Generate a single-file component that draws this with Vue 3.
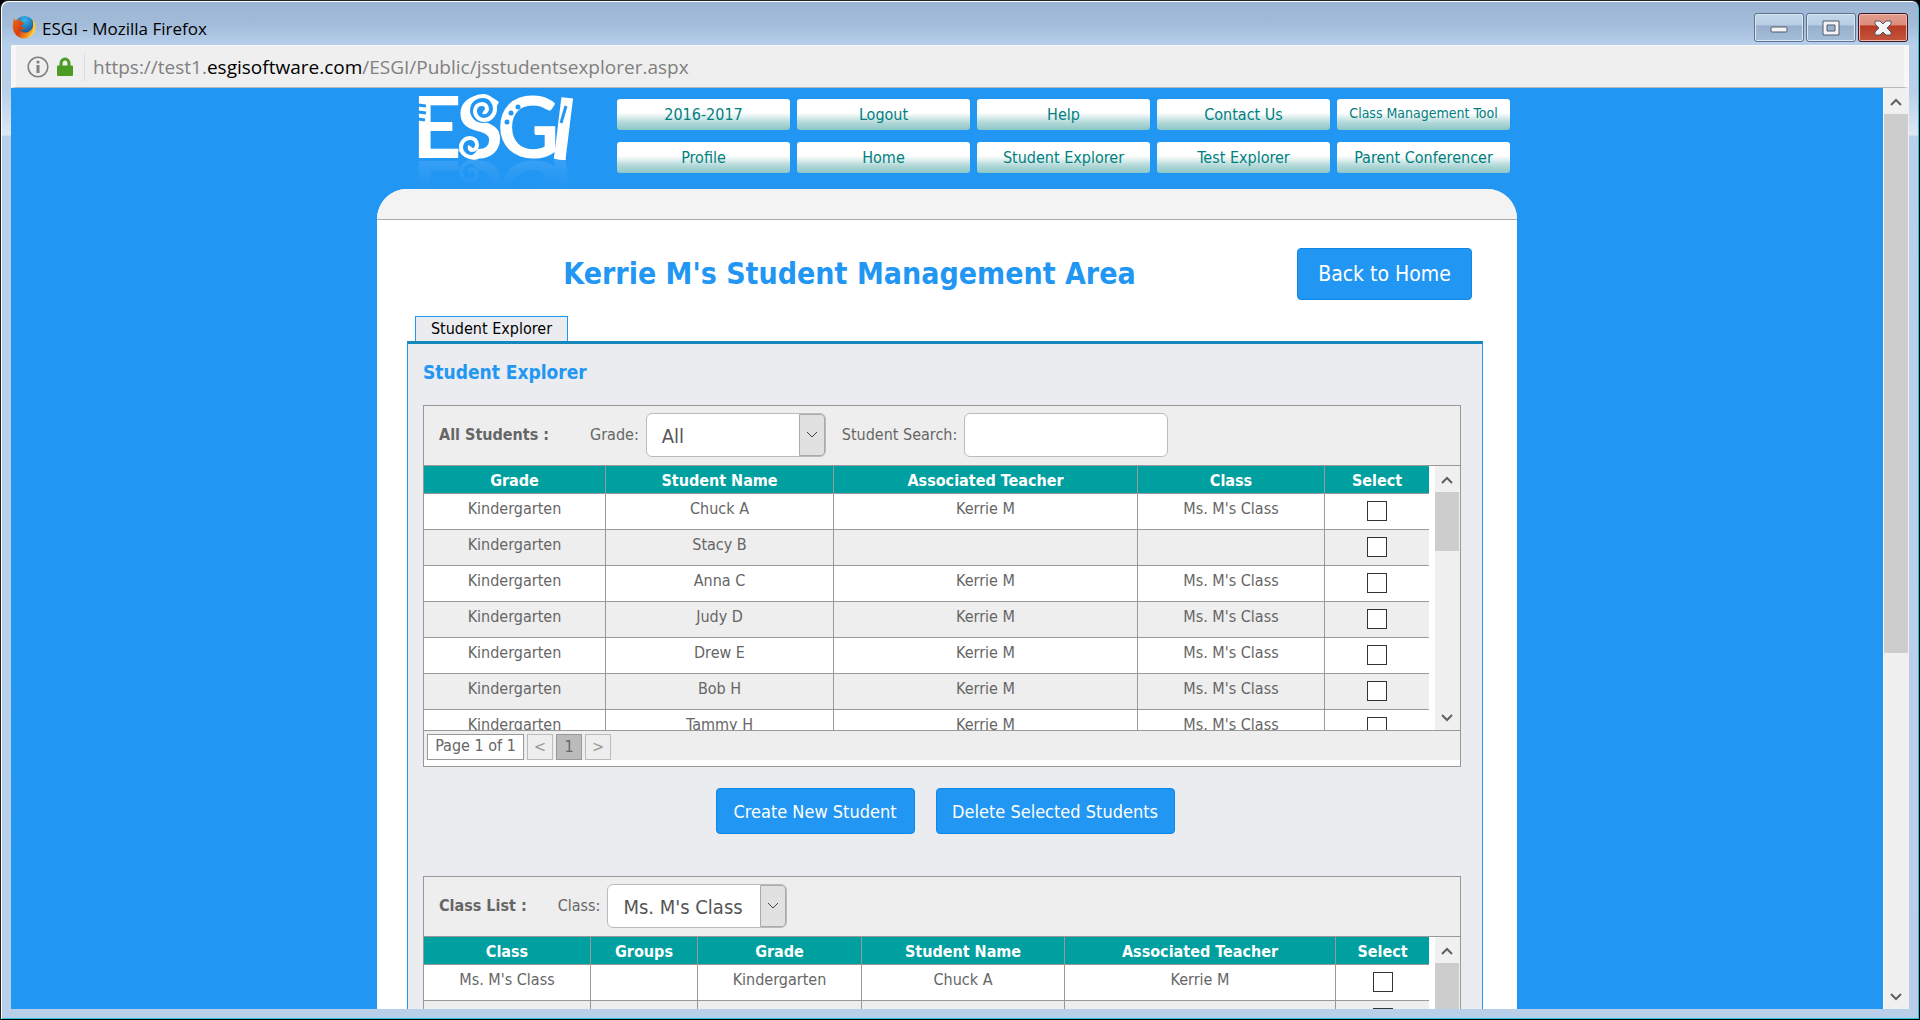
<script setup>
import { ref } from 'vue'

const navRows = [
  [
    { label: '2016-2017' },
    { label: 'Logout' },
    { label: 'Help' },
    { label: 'Contact Us' },
    { label: 'Class Management Tool', small: true },
  ],
  [
    { label: 'Profile' },
    { label: 'Home' },
    { label: 'Student Explorer' },
    { label: 'Test Explorer' },
    { label: 'Parent Conferencer' },
  ],
]

const row = (name, assigned = true) => ({
  grade: 'Kindergarten',
  name,
  teacher: assigned ? 'Kerrie M' : '',
  klass: assigned ? "Ms. M's Class" : '',
})

const students = [
  row('Chuck A'),
  row('Stacy B', false),
  row('Anna C'),
  row('Judy D'),
  row('Drew E'),
  row('Bob H'),
  row('Tammy H'),
]
const classList = [row('Chuck A'), row('Anna C'), row('Judy D')]

const grade = ref('All')
const search = ref('')
const klass = ref("Ms. M's Class")
</script>

<template>
  <div class="window">
    <header class="titlebar">
      <svg class="firefox" viewBox="0 0 24 24" aria-hidden="true">
        <defs>
          <radialGradient id="globe" cx="0.5" cy="0.2" r="0.8">
            <stop offset="0" stop-color="#35b8ea" />
            <stop offset="1" stop-color="#0b3f86" />
          </radialGradient>
          <linearGradient id="fur" x1="0" y1="0" x2="1" y2="0.6">
            <stop offset="0" stop-color="#e8701a" />
            <stop offset="0.5" stop-color="#d93c10" />
            <stop offset="1" stop-color="#fbc02d" />
          </linearGradient>
        </defs>
        <circle cx="12.500" cy="11" r="10" fill="url(#globe)" />
        <path
          d="M2 3C1 7 0.500 11 1 14c1 5 5.500 9.500 11 9.500S23 19 23.500 13c.2-4-1-7-3-9 1 3 1 5 .5 7-1 4-4 6.500-7.500 6.500-3 0-5-1.500-5.500-3.500 2 1 4 .5 5.500-1-2 0-3.500-.5-4.500-2 0-1.500 1.500-1.500 3-2 0-1-1.500-2-3-2.500C8 6 8 5 8.500 3.500 7 4 6 5 5.500 5.500 4 5.500 2.500 5 2 3z"
          fill="url(#fur)"
        />
        <path d="M20.500 4c3 3 3.600 8 2.400 11.500C21.500 20 18 22 15 22.500c4-2 6.500-6 6.300-11.500 0-3-.3-5-.8-7z" fill="#ffcf3f" />
      </svg>
      <span class="window-title">ESGI - Mozilla Firefox</span>
      <div class="window-controls">
        <button type="button" class="win-btn" aria-label="Minimize">
          <svg viewBox="0 0 18 18"><rect x="1" y="8" width="16" height="5" rx="1" /></svg>
        </button>
        <button type="button" class="win-btn" aria-label="Maximize">
          <svg viewBox="0 0 18 18">
            <path fill-rule="evenodd" d="M1 2h16v14H1zM5 6v6h8V6z" />
          </svg>
        </button>
        <button type="button" class="win-btn close" aria-label="Close">
          <svg viewBox="0 0 18 18">
            <path d="M1 2h5l3 3 3-3h5v3l-4 4 4 4v3h-5l-3-3-3 3H1v-3l4-4-4-4z" />
          </svg>
        </button>
      </div>
    </header>

    <div class="frame">
      <div class="urlbar">
        <svg class="info" viewBox="0 0 22 22" aria-hidden="true">
          <circle cx="11" cy="11" r="9.800" fill="none" stroke="#808080" stroke-width="1.600" />
          <circle cx="11" cy="6" r="1.600" fill="#808080" />
          <path d="M11 9v8" stroke="#808080" stroke-width="3" fill="none" />
        </svg>
        <svg class="lock" viewBox="0 0 16 20" aria-hidden="true">
          <path d="M4 10V6.500a4 4.500 0 0 1 8 0V10" fill="none" stroke="#4b9b24" stroke-width="3" />
          <rect x="0" y="8.500" width="16" height="10.500" rx="1" fill="#4b9b24" />
        </svg>
        <span class="divider"></span>
        <span class="url">https://test1.<b>esgisoftware.com</b>/ESGI/Public/jsstudentsexplorer.aspx</span>
      </div>

      <div class="viewport">
        <main class="page">
          <div class="container">
            <div class="masthead">
              <svg class="logo" viewBox="0 0 160 94" role="img" aria-label="ESGI">
                <defs>
                  <linearGradient id="fade" x1="0" y1="0" x2="0" y2="1">
                    <stop offset="0" stop-color="#2196f3" stop-opacity="0.900" />
                    <stop offset="1" stop-color="#2196f3" />
                  </linearGradient>
                  <g id="wordmark">
                    <text class="mark" fill="#fff" y="65" x="-6 38 79 129" rotate="0 0 0 7">ESGI</text>
                    <circle cx="65" cy="17" r="13" fill="#2196f3" />
                    <path
                      d="M50 14c2-8 9-11 15-11 7 0 12 6 12 13 0 6-5 11-11 11-5 0-9-4-9-9 0-4 3-7 7-7 3 0 5 2 5 5 0 2-2 4-4 3"
                      fill="none" stroke="#fff" stroke-width="4"
                    />
                    <circle cx="50" cy="53" r="10" fill="#2196f3" />
                    <path
                      d="M60 64c-10 2-17-3-17-10 0-5 4-9 9-9 4 0 7 3 7 7 0 3-2 5-5 5-2 0-3-2-2-4"
                      fill="none" stroke="#fff" stroke-width="4"
                    />
                    <path d="M0 12l8 1M0 19l8 1M0 26l7 1" stroke="#2196f3" stroke-width="3" />
                    <g fill="#2196f3">
                      <circle cx="100" cy="14" r="2.500" />
                      <circle cx="93" cy="20" r="2.500" />
                      <circle cx="89" cy="29" r="2.500" />
                    </g>
                    <path d="M148 13l-5 17" stroke="#2196f3" stroke-width="3" />
                  </g>
                </defs>
                <use href="#wordmark" />
                <use href="#wordmark" transform="matrix(1 0 0 -1 0 133)" />
                <rect x="0" y="67" width="160" height="27" fill="url(#fade)" />
              </svg>
              <nav class="nav">
                <div v-for="(items, i) in navRows" :key="i" class="nav-row">
                  <a v-for="item in items" :key="item.label" href="#" :class="{ small: item.small }">{{ item.label }}</a>
                </div>
              </nav>
            </div>

            <section class="sheet">
              <div class="band"></div>
              <div class="sheet-body">
                <div class="heading">
                  <h1>Kerrie M's Student Management Area</h1>
                  <button type="button" class="primary large">Back to Home</button>
                </div>

                <div class="tabs">
                  <button type="button" class="tab">Student Explorer</button>
                </div>

                <div class="panel">
                  <h2>Student Explorer</h2>

                  <div class="box">
                    <div class="filters">
                      <strong>All Students :</strong>
                      <label for="grade" class="wide">Grade:</label>
                      <span class="select">
                        <select id="grade" v-model="grade">
                          <option>All</option>
                          <option>Kindergarten</option>
                        </select>
                        <span class="drop">
                          <svg viewBox="0 0 12 8"><path d="M1 1l5 5 5-5" /></svg>
                        </span>
                      </span>
                      <label for="search" class="second">Student Search:</label>
                      <input id="search" v-model="search" type="text" />
                    </div>
                    <div class="list">
                      <table class="students">
                        <colgroup>
                          <col class="c-grade" /><col class="c-name" /><col class="c-teacher" /><col class="c-class" /><col />
                        </colgroup>
                        <thead>
                          <tr><th>Grade</th><th>Student Name</th><th>Associated Teacher</th><th>Class</th><th>Select</th></tr>
                        </thead>
                        <tbody>
                          <tr v-for="s in students" :key="s.name">
                            <td>{{ s.grade }}</td>
                            <td>{{ s.name }}</td>
                            <td>{{ s.teacher }}</td>
                            <td>{{ s.klass }}</td>
                            <td><input type="checkbox" :aria-label="'Select ' + s.name" /></td>
                          </tr>
                        </tbody>
                      </table>
                      <div class="scroll inner">
                        <svg class="arrow" viewBox="0 0 12 10"><path d="M1 8l5-5 5 5" /></svg>
                        <div class="track"><div class="thumb"></div></div>
                        <svg class="arrow" viewBox="0 0 12 10"><path d="M1 2l5 5 5-5" /></svg>
                      </div>
                    </div>
                    <div class="pager">
                      <span class="page-info">Page 1 of 1</span>
                      <button type="button">&lt;</button>
                      <button type="button" class="current">1</button>
                      <button type="button">&gt;</button>
                    </div>
                  </div>

                  <div class="actions">
                    <button type="button" class="primary create">Create New Student</button>
                    <button type="button" class="primary delete">Delete Selected Students</button>
                  </div>

                  <div class="box">
                    <div class="filters">
                      <strong>Class List :</strong>
                      <label for="klass">Class:</label>
                      <span class="select">
                        <select id="klass" v-model="klass">
                          <option>Ms. M's Class</option>
                        </select>
                        <span class="drop">
                          <svg viewBox="0 0 12 8"><path d="M1 1l5 5 5-5" /></svg>
                        </span>
                      </span>
                    </div>
                    <div class="list">
                      <table class="classes">
                        <colgroup>
                          <col class="c-class" /><col class="c-groups" /><col class="c-grade" /><col class="c-name" /><col class="c-teacher" /><col />
                        </colgroup>
                        <thead>
                          <tr><th>Class</th><th>Groups</th><th>Grade</th><th>Student Name</th><th>Associated Teacher</th><th>Select</th></tr>
                        </thead>
                        <tbody>
                          <tr v-for="s in classList" :key="s.name">
                            <td>{{ s.klass }}</td>
                            <td></td>
                            <td>{{ s.grade }}</td>
                            <td>{{ s.name }}</td>
                            <td>{{ s.teacher }}</td>
                            <td><input type="checkbox" :aria-label="'Select ' + s.name" /></td>
                          </tr>
                        </tbody>
                      </table>
                      <div class="scroll inner">
                        <svg class="arrow" viewBox="0 0 12 10"><path d="M1 8l5-5 5 5" /></svg>
                        <div class="track"><div class="thumb"></div></div>
                        <svg class="arrow" viewBox="0 0 12 10"><path d="M1 2l5 5 5-5" /></svg>
                      </div>
                    </div>
                  </div>
                </div>
              </div>
            </section>
          </div>
        </main>
        <div class="scroll outer">
          <svg class="arrow" viewBox="0 0 12 10"><path d="M1 8l5-5 5 5" /></svg>
          <div class="track"><div class="thumb"></div></div>
          <svg class="arrow" viewBox="0 0 12 10"><path d="M1 2l5 5 5-5" /></svg>
        </div>
      </div>
    </div>
  </div>
</template>

<style>
body {
  background: #000;
}
</style>

<style scoped>
* {
  box-sizing: border-box;
}

.window {
  display: flex;
  flex-direction: column;
  height: 100vh;
  overflow: hidden;
  padding: 0 10px 10px;
  border: 1px solid #222;
  border-right-color: #000;
  border-bottom-color: #000;
  border-radius: 8px 8px 0 0;
  box-shadow: inset 1px 1px 0 #fff, inset -1px -1px 0 #26c6da;
  background: linear-gradient(#9ab4d3, #a3bcd9 24px, #b6cfeb 44px, #b9cfe9 90px, #dce8f5 134px, #b9d0ea 135px, #b9cfe9);
  font-family: 'DejaVu Sans Condensed', 'DejaVu Sans', sans-serif;
  font-stretch: condensed;
  font-size: 16px;
  color: #666;
}

button,
input,
select {
  font: inherit;
  margin: 0;
}

.titlebar {
  flex: none;
  display: flex;
  align-items: flex-start;
  height: 44px;
  padding-left: 1px;
}
.firefox {
  width: 24px;
  height: 24px;
  margin-top: 14px;
}
.window-title {
  margin: 16px 0 0 6px;
  font: 17px/24px 'Open Sans', sans-serif;
  color: #000;
}
.window-controls {
  display: flex;
  gap: 2px;
  margin: 12px 1px 0 auto;
}
.win-btn {
  display: flex;
  align-items: center;
  justify-content: center;
  width: 50px;
  height: 29px;
  padding: 0;
  border: 1px solid #5f728b;
  border-radius: 3px;
  box-shadow: inset 0 0 0 1px #dce8f4;
  background: linear-gradient(#c3d6ea, #b9cee4 42%, #98b0cc 43%, #a3bcd8);
}
.win-btn svg {
  width: 18px;
  height: 18px;
  fill: #f4f4f4;
  stroke: #50596b;
  stroke-width: 1;
}
.win-btn.close {
  border-color: #431422;
  box-shadow: inset 0 0 0 1px #eebbb0;
  background: linear-gradient(#e29c8e, #dd8c7c 42%, #b83a23 43%, #c5553e);
}

.frame {
  flex: 1;
  min-height: 0;
  display: flex;
  flex-direction: column;
}
.urlbar {
  flex: none;
  display: flex;
  align-items: center;
  height: 43px;
  padding: 0 11px;
  border: solid #f7f7f7;
  border-width: 1px 5px 0;
  border-bottom: 1px solid #b8b8b8;
  background: #efefef;
}
.info {
  width: 22px;
  height: 22px;
}
.lock {
  width: 16px;
  height: 20px;
  margin-left: 8px;
}
.divider {
  width: 1px;
  height: 28px;
  margin: 0 8px 0 11px;
  background: #dcdcdc;
}
.url {
  padding-top: 1px;
  font: 19px/28px 'Open Sans', sans-serif;
  color: #808080;
}
.url b {
  font-weight: 400;
  color: #000;
}

.viewport {
  flex: 1;
  min-height: 0;
  display: flex;
  overflow: hidden;
}
.page {
  flex: 1;
  min-width: 0;
  overflow: hidden;
  background: #2196f3;
}
.container {
  max-width: 1140px;
  margin: 0 auto;
}

.masthead {
  display: flex;
  justify-content: space-between;
  height: 101px;
  padding: 5px 7px 0 41px;
}
.logo {
  width: 160px;
  height: 94px;
}
.mark {
  font: 700 86px Lato, sans-serif;
}
.nav {
  padding-top: 6px;
}
.nav-row {
  display: flex;
  gap: 7px;
  margin-bottom: 12px;
}
.nav a {
  width: 173px;
  height: 31px;
  border-radius: 3px;
  background: linear-gradient(#fff 45%, #b5d9d9 75%, #8cc6c6);
  color: #008080;
  line-height: 31px;
  text-align: center;
  text-decoration: none;
}
.nav a.small {
  font-size: 14px;
  line-height: 28px;
}

.sheet {
  overflow: hidden;
  border-radius: 30px 30px 0 0;
  background: #fff;
}
.band {
  height: 31px;
  border-bottom: 1px solid #aaa;
  background: #f3f3f3;
}
.sheet-body {
  padding: 28px 34px 40px 30px;
}
.heading {
  display: flex;
  align-items: center;
  margin-right: 11px;
}
h1 {
  flex: 1;
  margin: 0;
  padding-right: 5px;
  color: #2196f3;
  font-size: 30px;
  line-height: 40px;
  text-align: center;
}
.primary {
  height: 46px;
  padding: 0;
  border: 1px solid #0d87e9;
  border-radius: 4px;
  background: #2196f3;
  color: #fff;
  font-size: 18px;
}
.primary.large {
  width: 175px;
  height: 52px;
  font-size: 21px;
}
.create {
  width: 199px;
}
.delete {
  width: 239px;
}

.tabs {
  display: flex;
  margin-top: 16px;
  padding-left: 8px;
}
.tab {
  width: 153px;
  height: 25px;
  padding: 0 0 2px;
  border: 1px solid #2196f3;
  border-bottom: 0;
  background: #eaecf0;
  color: #000;
}
.panel {
  padding: 16px 21px 21px 15px;
  border: 1px solid #2196f3;
  border-top: 3px solid #1487bd;
  background: #eaecf0;
}
h2 {
  margin: 0 0 21px;
  color: #2196f3;
  font-size: 19px;
  line-height: 24px;
}

.box {
  border: 1px solid #999;
  background: #fff;
}
.filters {
  display: flex;
  align-items: center;
  height: 60px;
  padding: 0 0 2px 15px;
  border-bottom: 1px solid #999;
  background: #eee;
}
.filters label {
  margin: 0 7px 0 31px;
}
.filters label.wide {
  margin-left: 41px;
}
.filters label.second {
  margin-left: 16px;
}
.select {
  position: relative;
  width: 180px;
  height: 44px;
}
.select select {
  appearance: none;
  width: 100%;
  height: 100%;
  padding: 2px 28px 0 15px;
  border: 1px solid #bbb;
  border-radius: 6px;
  background: #fff;
  color: #555;
  font-size: 20px;
}
.drop {
  position: absolute;
  top: 1px;
  right: 1px;
  bottom: 1px;
  display: flex;
  align-items: center;
  justify-content: center;
  width: 26px;
  border: 1px solid #aaa;
  border-radius: 0 4px 4px 0;
  background: #e1e1e1;
  pointer-events: none;
}
.drop svg {
  width: 12px;
  height: 8px;
  fill: none;
  stroke: #444;
}
.filters input {
  width: 204px;
  height: 44px;
  padding: 0 12px;
  border: 1px solid #bbb;
  border-radius: 6px;
  background: #fff;
  font-size: 20px;
}

.list {
  display: flex;
  justify-content: space-between;
  height: 265px;
  overflow: hidden;
  border-bottom: 1px solid #999;
}
table {
  align-self: flex-start;
  table-layout: fixed;
  width: 1005px;
  border-spacing: 0;
}
.students .c-grade {
  width: 182px;
}
.students .c-name {
  width: 228px;
}
.students .c-teacher {
  width: 304px;
}
.students .c-class {
  width: 187px;
}
.classes .c-class {
  width: 167px;
}
.classes .c-groups {
  width: 107px;
}
.classes .c-grade {
  width: 164px;
}
.classes .c-name {
  width: 203px;
}
.classes .c-teacher {
  width: 271px;
}
th,
td {
  padding: 0;
  border: solid #999;
  border-width: 0 1px 1px 0;
  text-align: center;
}
th:last-child,
td:last-child {
  border-right: 0;
}
th {
  height: 28px;
  padding-top: 1px;
  background: #00a0a0;
  color: #fff;
}
td {
  height: 36px;
  padding-top: 5px;
  line-height: 20px;
  vertical-align: top;
}
tbody tr:nth-child(even) {
  background: #eee;
}
td input {
  appearance: none;
  display: block;
  width: 20px;
  height: 20px;
  margin: 2px auto 0;
  border: 1px solid #333;
  background: #fff;
}

.scroll {
  flex: none;
  display: flex;
  flex-direction: column;
  align-items: stretch;
  background: #f0f0f0;
}
.track {
  flex: 1;
}
.thumb {
  background: #cdcdcd;
}
.arrow {
  align-self: center;
  flex: none;
  width: 12px;
  height: 10px;
  margin: 9px 0 7px;
  fill: none;
  stroke: #606060;
  stroke-width: 2;
}
.inner {
  width: 25px;
  padding-right: 1px;
}
.inner .thumb {
  height: 59px;
}
.outer {
  width: 26px;
  padding: 0 1px 0 0;
  border-left: 1px solid #fff;
}
.outer .thumb {
  height: 62%;
}

.pager {
  display: flex;
  gap: 3px;
  margin-bottom: 6px;
  padding: 3px 3px 0;
  background: #eee;
}
.pager button,
.page-info {
  height: 26px;
  border: 1px solid #999;
  line-height: 22px;
  text-align: center;
}
.page-info {
  width: 97px;
  background: #fff;
}
.pager button {
  width: 26px;
  padding: 0;
  border-color: #bbb;
  background: #eee;
  color: #999;
}
.pager button.current {
  border-color: #999;
  background: #bbb;
  color: #666;
}

.actions {
  display: flex;
  justify-content: center;
  gap: 21px;
  margin: 21px 0 42px;
  padding-left: 6px;
}
</style>
